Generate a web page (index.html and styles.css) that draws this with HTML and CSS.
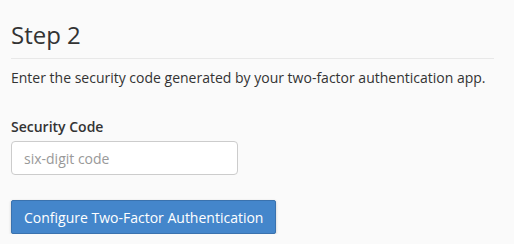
FILE: index.html
```html
<!DOCTYPE html>
<html>
<head>
<meta charset="utf-8">
<link rel="stylesheet" href="styles.css">
</head>
<body>
<div class="page">
  <h2 class="title">Step 2</h2>
  <p class="intro">Enter the security code generated by your two-factor authentication app.</p>
  <div class="field">
    <label class="label" for="code">Security Code</label>
    <input class="input" id="code" type="text" placeholder="six-digit code">
  </div>
  <button class="btn" type="button">Configure Two-Factor Authentication</button>
</div>
</body>
</html>
```
FILE: styles.css
```css
html, body {
  margin: 0;
  padding: 0;
  background: #fafafa;
}
body {
  font-family: "Open Sans", "Liberation Sans", sans-serif;
  color: #333;
  font-size: 14px;
}
.page {
  width: 483px;
  padding: 19px 0 0 11px;
}
.title {
  margin: 0;
  font-size: 24px;
  font-weight: 400;
  line-height: 32px;
  padding-bottom: 7px;
  border-bottom: 1px solid #e8e8e8;
  color: #333;
}
.intro {
  margin: 9px 0 0;
  line-height: 20px;
}
.field {
  margin-top: 29px;
  display: flex;
  flex-direction: column;
}
.label {
  font-weight: 600;
  line-height: 20px;
  margin-bottom: 4px;
}
.input {
  box-sizing: border-box;
  width: 227px;
  height: 34px;
  border: 1px solid #ccc;
  border-radius: 4px;
  background: #fff;
  padding: 6px 12px;
  font-family: inherit;
  font-size: 14px;
  color: #333;
}
.input::placeholder {
  color: #999;
}
.btn {
  margin-top: 25px;
  box-sizing: border-box;
  height: 34px;
  padding: 6px 12px;
  background: #4486cb;
  border: 1px solid #3a72ae;
  border-radius: 2px;
  color: #fff;
  font-family: inherit;
  font-size: 14px;
  box-shadow: 0 1px 3px rgba(0,0,0,0.2);
}
```
